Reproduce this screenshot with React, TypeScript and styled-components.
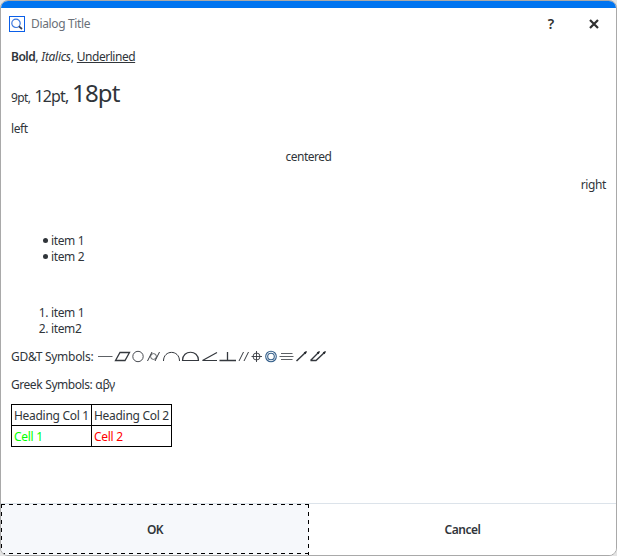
import React from "react";
import styled, { createGlobalStyle } from "styled-components";

const GlobalStyle = createGlobalStyle`
  * { box-sizing: border-box; }
  html, body { margin: 0; padding: 0; }
  body { background: #e4e4e4; overflow: hidden; }
`;

const Dialog = styled.div`
  width: 617px;
  height: 556px;
  display: flex;
  flex-direction: column;
  background: #fff;
  border: 1px solid #a9a9a9;
  border-radius: 8px;
  overflow: hidden;
  color: #30353a;
  font: 12px/16px "Noto Sans", sans-serif;
  white-space: nowrap;
`;

const Accent = styled.div`
  height: 7px;
  flex: none;
  background: #0074f0;
`;

const TitleBar = styled.header`
  height: 31px;
  flex: none;
  display: flex;
  align-items: center;
  padding: 0 15px 0 8px;
`;

const Title = styled.h1`
  margin: 0 auto 0 6px;
  font-size: 12px;
  font-weight: 400;
  letter-spacing: -0.36px;
  color: #6a7078;
`;

const TitleButton = styled.button`
  width: 14px;
  height: 20px;
  padding: 0;
  margin-left: 29px;
  border: 0;
  background: none;
  display: grid;
  place-items: center;
  color: #303030;
  font: 600 14px/20px "Noto Sans", sans-serif;
`;

const Content = styled.main`
  flex: 1;
  padding: 10px 10px 0;
`;

const Paragraph = styled.p<{ $align?: string; $spacing?: number }>`
  margin: 0 0 12px;
  height: 16px;
  text-align: ${(p) => p.$align ?? "left"};
  letter-spacing: ${(p) => p.$spacing ?? -0.38}px;
  word-spacing: 0.5px;
`;

const SizesLine = styled.p`
  margin: 0 0 12px;
  height: 32px;
  display: flex;
  align-items: baseline;
  line-height: 32px;
`;

const Sized = styled.span<{ $size: number; $width: number; $spacing: number }>`
  font-size: ${(p) => p.$size}px;
  width: ${(p) => p.$width}px;
  letter-spacing: ${(p) => p.$spacing}px;
`;

const Strong = styled.strong`
  font-weight: 600;
  letter-spacing: -0.5px;
`;

const Italic = styled.em`
  letter-spacing: -0.3px;
`;

const Underlined = styled.u`
  letter-spacing: -0.47px;
  text-underline-offset: 1px;
`;

const List = styled.ul`
  margin: 40px 0 0;
  padding: 0;
  list-style: none;
  letter-spacing: -0.36px;
`;

const Item = styled.li`
  height: 16px;
  display: flex;
`;

const Marker = styled.span`
  width: 40px;
  padding-right: 3px;
  display: flex;
  justify-content: flex-end;
`;

const Dot = styled.i`
  width: 5px;
  height: 5px;
  margin-top: 5px;
  border-radius: 50%;
  background: #30353a;
`;

const SymbolLine = styled.div`
  display: flex;
  height: 16px;
  margin: 12px 0;
`;

const SymbolLabel = styled.span`
  width: 86px;
  letter-spacing: -0.28px;
`;

const Table = styled.table`
  margin-top: -1px;
  border-collapse: collapse;
  table-layout: fixed;
  width: 161px;
`;

const Cell = styled.td<{ $color?: string }>`
  height: 21px;
  padding: 2px 0 1px 2px;
  border: 1px solid #000;
  color: ${(p) => p.$color ?? "inherit"};
  letter-spacing: -0.29px;
`;

const Footer = styled.footer`
  height: 52px;
  flex: none;
  display: grid;
  grid-template-columns: 308px 1fr;
  border-top: 1px solid #dce3ea;
`;

const ActionButton = styled.button`
  border: 0;
  padding: 0;
  background: #fff;
  color: #30353a;
  font: 600 12px/16px "Noto Sans", sans-serif;
  letter-spacing: -0.5px;
`;

const DefaultButton = styled(ActionButton)`
  background:
    repeating-linear-gradient(90deg, #000 0 4px, transparent 4px 8px) 0 0 / 100% 1px no-repeat,
    repeating-linear-gradient(90deg, #000 0 4px, transparent 4px 8px) 0 calc(100% - 1px) / 100% 1px no-repeat,
    repeating-linear-gradient(#000 0 4px, transparent 4px 8px) 0 0 / 1px 100% no-repeat,
    repeating-linear-gradient(#000 0 4px, transparent 4px 8px) 100% 0 / 1px 100% no-repeat,
    #f6f8fb;
`;

const SearchIcon = () => (
  <svg width="16" height="16" viewBox="0 0 16 16" fill="none">
    <rect x=".5" y=".5" width="15" height="15" stroke="#0b5fe8" />
    <circle cx="7" cy="7.3" r="4.2" stroke="#3b78df" strokeWidth="1.2" />
    <path d="M10 10.3 13 13" stroke="#3b3e48" strokeWidth="1.7" />
  </svg>
);

const CloseIcon = () => (
  <svg width="10" height="10" viewBox="0 0 10 10">
    <path d="M1 1 9 9M9 1 1 9" stroke="#303030" strokeWidth="2.2" />
  </svg>
);

/* Geometric dimensioning and tolerancing characteristics, in drawing order. */
const ToleranceSymbols = () => (
  <svg width="232" height="16" viewBox="97 349 232 16" fill="none" stroke="#34383e" strokeWidth="1">
    <path d="M98 356.5H112.5" strokeWidth=".8" />
    <path d="M115.5 360.5H125L129.5 352.5H120Z" strokeWidth="1.3" />
    <circle cx="138" cy="356.5" r="5.2" strokeWidth=".9" />
    <path d="M147.5 361 152 352M155 361 159.5 352" />
    <circle cx="153.5" cy="356.5" r="2.9" strokeWidth=".8" />
    <path d="M163.5 361C163.5 349.5 179.5 349.5 179.5 361" />
    <path d="M182.5 360.5C182.5 349.5 198.5 349.5 198.5 360.5Z" strokeWidth="1.2" />
    <path d="M217 352.5 202.5 360.5H217" strokeWidth="1.2" />
    <path d="M219.5 360.5H236M227.5 360.5V352" strokeWidth="1.3" />
    <path d="M239 361 243.5 352M244 361 248.5 352" />
    <circle cx="256.5" cy="356.5" r="3.5" strokeWidth=".9" />
    <path d="M251.5 356.5H262M256.5 351V362" strokeWidth=".9" />
    <g stroke="#345f8a" strokeWidth="1.1">
      <circle cx="271" cy="356.5" r="5.3" />
      <circle cx="271" cy="356.5" r="3.3" />
    </g>
    <path d="M281 353.5H292.5M279.5 356.5H293.5M281 359.5H292.5" strokeWidth=".8" />
    <path d="M296.5 361 306 352" strokeWidth="1.5" />
    <path d="m307 351-1.3 3.3-2-2Z" fill="#202328" stroke="none" />
    <path d="M310.5 360.5 319 352M310.5 360.5H316L325 352" strokeWidth="1.4" />
    <path d="m320 351-1.3 3.3-2-2ZM326 351l-1.3 3.3-2-2Z" fill="#202328" stroke="none" />
  </svg>
);

export default function App() {
  return (
    <>
      <GlobalStyle />
      <Dialog role="dialog" aria-label="Dialog Title">
        <Accent />
        <TitleBar>
          <SearchIcon />
          <Title>Dialog Title</Title>
          <TitleButton aria-label="Help">?</TitleButton>
          <TitleButton aria-label="Close"><CloseIcon /></TitleButton>
        </TitleBar>
        <Content>
          <Paragraph>
            <Strong>Bold</Strong>, <Italic>Italics</Italic>, <Underlined>Underlined</Underlined>
          </Paragraph>
          <SizesLine>
            <Sized $size={12} $width={23.5} $spacing={-0.6}>9pt,</Sized>
            <Sized $size={16} $width={37.5} $spacing={-0.85}>12pt,</Sized>
            <Sized $size={24} $width={50} $spacing={-0.8}>18pt</Sized>
          </SizesLine>
          <Paragraph>left</Paragraph>
          <Paragraph $align="center" $spacing={-0.5}>centered</Paragraph>
          <Paragraph $align="right">right</Paragraph>
          <List>
            <Item><Marker><Dot /></Marker>item 1</Item>
            <Item><Marker><Dot /></Marker>item 2</Item>
          </List>
          <List as="ol">
            <Item><Marker>1.</Marker>item 1</Item>
            <Item><Marker>2.</Marker>item2</Item>
          </List>
          <SymbolLine>
            <SymbolLabel>GD&amp;T Symbols:</SymbolLabel>
            <ToleranceSymbols />
          </SymbolLine>
          <Paragraph $spacing={-0.46}>Greek Symbols: αβγ</Paragraph>
          <Table>
            <tbody>
              <tr><Cell>Heading Col 1</Cell><Cell>Heading Col 2</Cell></tr>
              <tr><Cell $color="#00ff00">Cell 1</Cell><Cell $color="#ff0000">Cell 2</Cell></tr>
            </tbody>
          </Table>
        </Content>
        <Footer>
          <DefaultButton>OK</DefaultButton>
          <ActionButton>Cancel</ActionButton>
        </Footer>
      </Dialog>
    </>
  );
}
